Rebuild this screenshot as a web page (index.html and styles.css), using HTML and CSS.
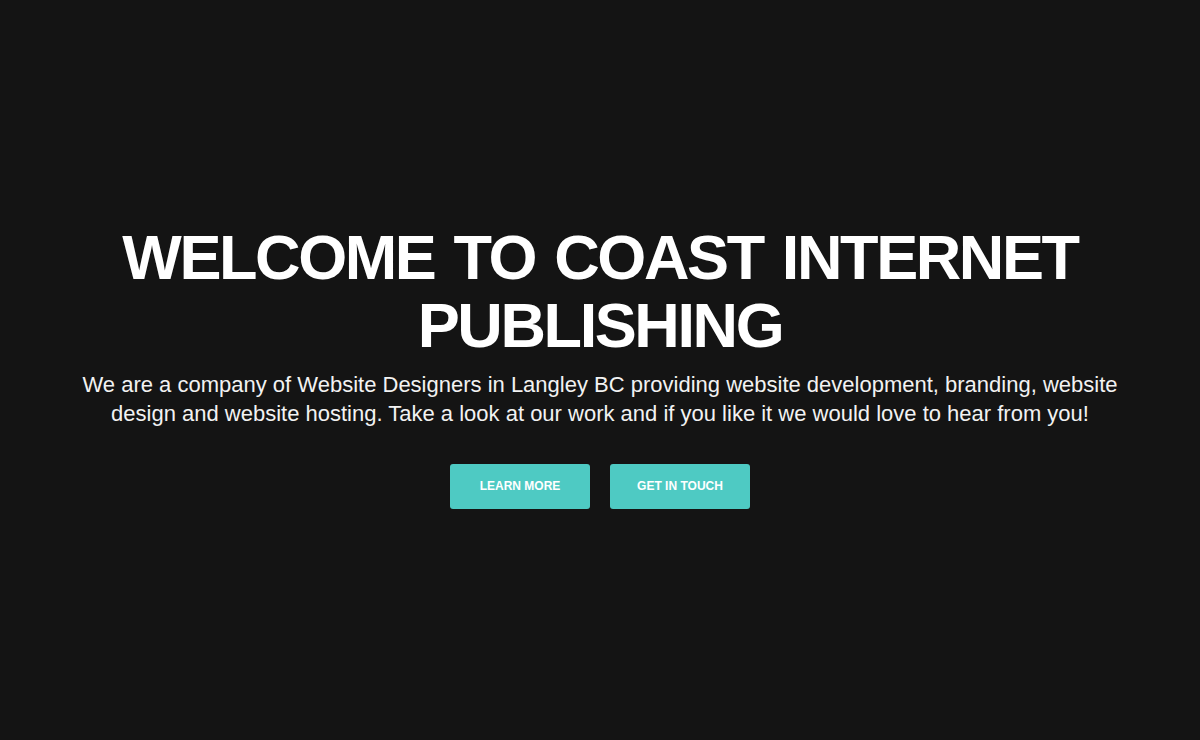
FILE: index.html
```html
<!DOCTYPE html>
<html>
<head>
<meta charset="utf-8">
<link rel="stylesheet" href="styles.css">
</head>
<body>
<section class="hero">
  <h1 class="title">WELCOME TO COAST INTERNET PUBLISHING</h1>
  <p class="lead">We are a company of Website Designers in Langley BC providing website development, branding, website design and website hosting. Take a look at our work and if you like it we would love to hear from you!</p>
  <div class="actions">
    <a class="btn" href="#">LEARN MORE</a>
    <a class="btn" href="#">GET IN TOUCH</a>
  </div>
</section>
</body>
</html>
```
FILE: styles.css
```css
html, body {
  margin: 0;
  padding: 0;
  background: #141414;
  height: 100%;
}
body {
  font-family: "Liberation Sans", Arial, sans-serif;
  color: #fff;
}
.hero {
  height: 740px;
  box-sizing: border-box;
  padding-top: 223px;
  display: flex;
  flex-direction: column;
  align-items: center;
}
.title {
  margin: 0;
  width: 1100px;
  font-size: 63px;
  line-height: 68px;
  letter-spacing: -2.4px;
  word-spacing: 4px;
  font-weight: 700;
  text-align: center;
}
.lead {
  margin: 12px 0 0;
  width: 1080px;
  font-size: 22px;
  line-height: 28.6px;
  text-align: center;
  color: #f2f2f2;
}
.actions {
  display: flex;
  gap: 20px;
  margin-top: 36px;
}
.btn {
  display: flex;
  align-items: center;
  justify-content: center;
  width: 140px;
  height: 45px;
  background: #4ecac3;
  color: #fff;
  text-decoration: none;
  font-size: 12px;
  font-weight: 700;
  border-radius: 3px;
  padding-bottom: 1px;
  box-sizing: border-box;
}
```
